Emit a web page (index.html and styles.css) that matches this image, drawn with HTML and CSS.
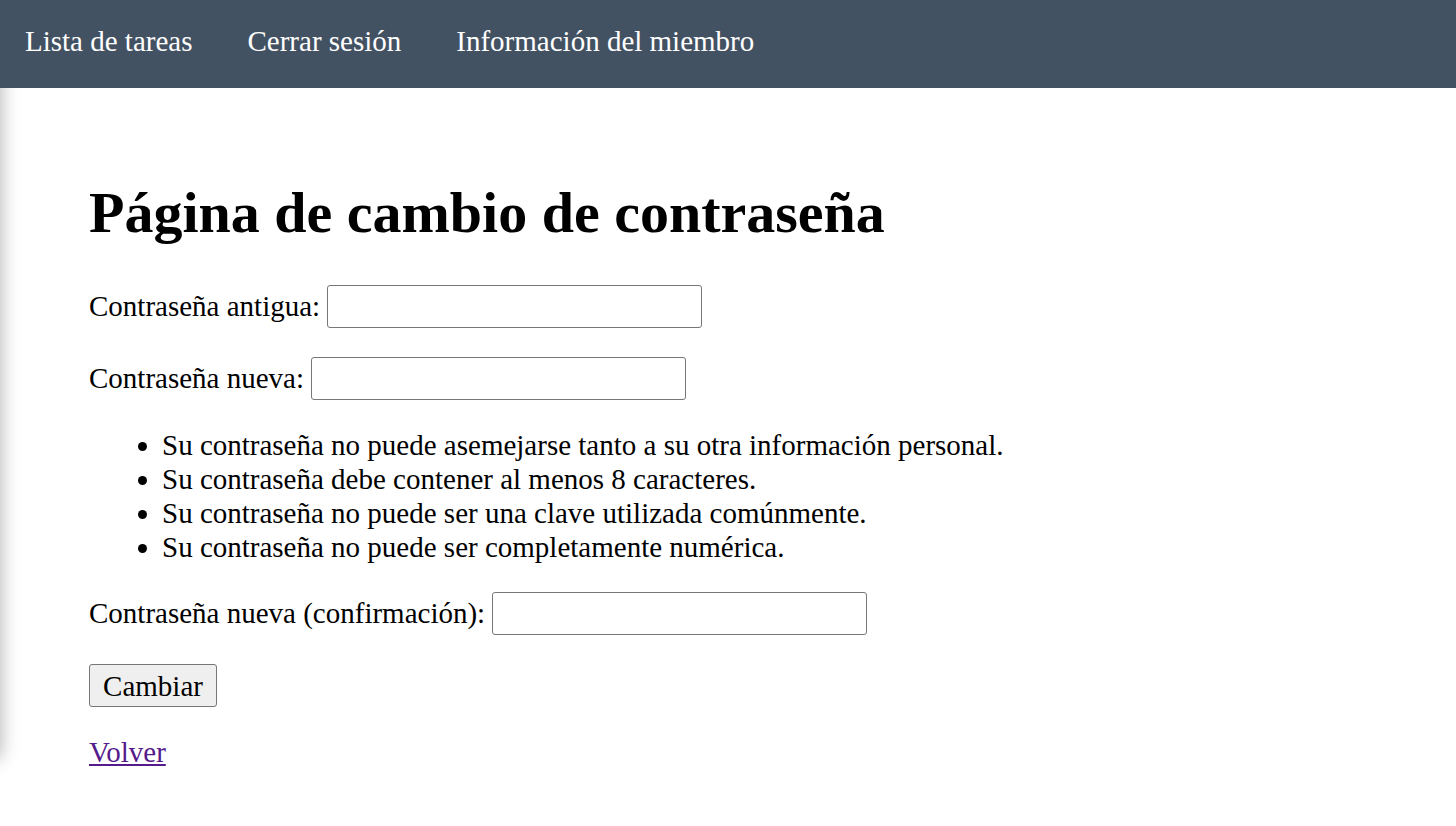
FILE: index.html
```html
<!DOCTYPE html>
<html lang="es">
<head>
<meta charset="utf-8">
<title>Página de cambio de contraseña</title>
<link rel="stylesheet" href="styles.css">
</head>
<body>
<aside class="drawer" aria-hidden="true"></aside>
<nav class="topnav">
  <a class="nav-link" href="#">Lista de tareas</a>
  <a class="nav-link" href="#">Cerrar sesión</a>
  <a class="nav-link" href="#">Información del miembro</a>
</nav>
<main class="content">
  <h1 class="title">Página de cambio de contraseña</h1>
  <form class="form">
    <p class="row"><label for="old">Contraseña antigua:</label> <input class="field" type="password" id="old"></p>
    <p class="row row-tight-bottom"><label for="new1">Contraseña nueva:</label> <input class="field" type="password" id="new1"></p>
    <ul class="help">
      <li>Su contraseña no puede asemejarse tanto a su otra información personal.</li>
      <li>Su contraseña debe contener al menos 8 caracteres.</li>
      <li>Su contraseña no puede ser una clave utilizada comúnmente.</li>
      <li>Su contraseña no puede ser completamente numérica.</li>
    </ul>
    <p class="row row-tight-top"><label for="new2">Contraseña nueva (confirmación):</label> <input class="field" type="password" id="new2"></p>
    <p class="row row-tight-bottom"><button class="btn" type="button">Cambiar</button></p>
  </form>
  <p class="row row-tight-top"><a class="back" href="#">Volver</a></p>
</main>
</body>
</html>
```
FILE: styles.css
```css
html, body {
  margin: 0;
  padding: 0;
  background: #ffffff;
}
body {
  font-family: "Liberation Serif", "Times New Roman", serif;
  font-size: 29px;
  line-height: 34px;
  color: #000;
}
.drawer {
  position: fixed;
  left: -300px;
  top: 0;
  width: 300px;
  height: 758px;
  background: #fff;
  box-shadow: 0 0 18px rgba(0, 0, 0, 0.32);
  z-index: 1;
}
.topnav {
  position: relative;
  z-index: 2;
  height: 88px;
  background: #435263;
  display: flex;
  align-items: center;
  gap: 55px;
  padding-left: 25px;
  box-sizing: border-box;
}
.nav-link {
  color: #ffffff;
  text-decoration: none;
  line-height: 34px;
  padding-bottom: 6px;
}
.content {
  padding: 52px 0 0 89px;
}
.title {
  font-size: 58px;
  line-height: 67px;
  font-weight: bold;
  margin: 39px 0;
}
.form {
  margin: 0;
}
.row {
  margin: 29px 0;
}
.row-tight-bottom {
  margin-bottom: 28px;
}
.row-tight-top {
  margin-top: 28px;
}
.field {
  width: 375px;
  height: 43px;
  box-sizing: border-box;
  border: 1px solid #767676;
  border-radius: 3px;
  vertical-align: baseline;
  font: inherit;
  padding: 2px 4px;
  background: #fff;
}
.help {
  margin: 28px 0;
  padding-left: 73px;
}
.btn {
  font: inherit;
  height: 43px;
  width: 128px;
  box-sizing: border-box;
  border: 1px solid #767676;
  border-radius: 3px;
  background: #efefef;
  color: #000;
  padding: 0;
}
.back {
  color: #551a8b;
}
```
